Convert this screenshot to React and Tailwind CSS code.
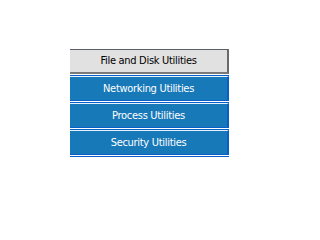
const ITEMS = ['Networking Utilities', 'Process Utilities', 'Security Utilities']

export default function App() {
  return (
    <div className="w-[300px] h-[206px] bg-white" style={{ fontFamily: '"DejaVu Sans Condensed", "DejaVu Sans", sans-serif' }}>
      <div className="pt-[49px] pl-[70px]">
        <div className="w-[159px]">
          <div className="h-[25px] pt-px bg-[#e1e1e1] border-t border-t-[#5b5f66] border-b-2 border-b-[#7a7a7a] border-r-2 border-r-[#6a6a6a] flex items-center justify-center text-[11px] tracking-[-0.3px] text-black">
            File and Disk Utilities
          </div>
          {ITEMS.map((label) => (
            <div key={label} className="mt-px border-t border-t-[#0a5ec8]">
              <div className="h-[25px] pt-px border-t border-t-[#e6f2fc] bg-[#1879b8] border-r-2 border-r-[#0a5ec8] border-b border-b-[#0a5ec8] flex items-center justify-center text-[11px] tracking-[-0.3px] text-white">
                {label}
              </div>
            </div>
          ))}
          <div className="mt-px h-px bg-[#0a5ec8]" />
        </div>
      </div>
    </div>
  )
}
